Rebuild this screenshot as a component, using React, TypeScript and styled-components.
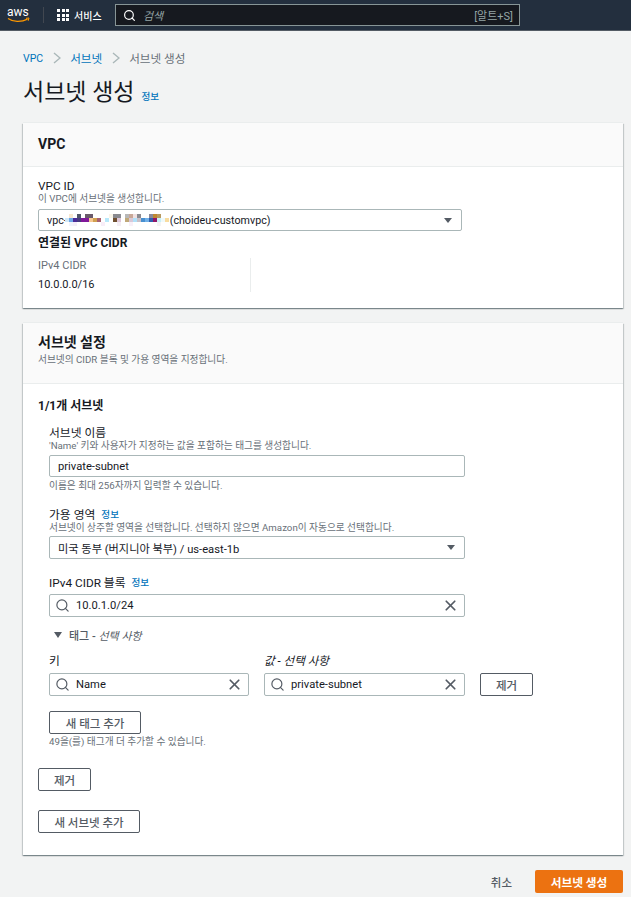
import React from "react";
import styled, { createGlobalStyle } from "styled-components";
import { Search, X } from "lucide-react";

const FONT = `Roboto, "Noto Sans CJK KR", sans-serif`;

const GlobalStyle = createGlobalStyle`
  html, body { margin: 0; padding: 0; background: #f2f3f3; }
  body { font-family: ${FONT}; color: #16191f; font-size: 12px; }
  * { box-sizing: border-box; }
`;

const Page = styled.div`
  width: 631px;
  height: 897px;
  overflow: hidden;
`;

const TopNav = styled.header`
  height: 31px;
  background: #232f3e;
  border-bottom: 1px solid #545b64;
  display: flex;
  align-items: center;
  padding-left: 7px;
`;

const Logo = styled.svg`
  width: 24px;
  height: 18px;
  flex: none;
`;

const NavDivider = styled.div`
  width: 1px;
  height: 16px;
  background: #414750;
  margin: 0 13px 0 12px;
`;

const ServicesBtn = styled.div`
  display: flex;
  align-items: center;
  gap: 5px;
  width: 58px;
  color: #fff;
  font-size: 10px;
  font-weight: 500;
`;

const Waffle = styled.div`
  display: grid;
  grid-template-columns: repeat(3, 3px);
  grid-auto-rows: 3px;
  gap: 1.5px;
  span { background: #fff; }
`;

const SearchBox = styled.div`
  width: 405px;
  height: 22px;
  background: #16191f;
  border: 1px solid #879596;
  display: flex;
  align-items: center;
  padding: 0 6px 0 7px;
  color: #fff;
  gap: 7px;
`;

const SearchHint = styled.span`
  flex: 1;
  font-style: italic;
  font-size: 11px;
  color: #95a5a6;
`;

const Shortcut = styled.span`
  font-size: 11px;
  color: #95a5a6;
`;

const Main = styled.main`
  padding: 19px 8px 0 23px;
`;

const Crumbs = styled.nav`
  display: flex;
  align-items: center;
  gap: 9.5px;
  height: 16px;
  font-size: 11.6px;
  color: #687078;
  a { color: #0073bb; }
  a:first-child { font-size: 10.5px; }
`;

const TitleRow = styled.div`
  display: flex;
  align-items: baseline;
  gap: 7px;
  margin-top: 11px;
  height: 31px;
  h1 {
    margin: 0;
    font-size: 23px;
    font-weight: 400;
    line-height: 31px;
  }
`;

const InfoLink = styled.a`
  font-size: 9.6px;
  color: #0073bb;
  font-weight: 500;
`;

const Card = styled.section<{ $height: number }>`
  background: #fff;
  height: ${(p) => p.$height}px;
  margin-bottom: 15px;
  box-shadow: 0 1px 1px 0 rgba(0, 28, 36, 0.3), 1px 1px 1px 0 rgba(0, 28, 36, 0.15), -1px 1px 1px 0 rgba(0, 28, 36, 0.15), 0 -1px 0 0 #eaeded;
  &:first-of-type { margin-top: 15px; }
`;

const CardHead = styled.div<{ $height: number; $top: number }>`
  height: ${(p) => p.$height}px;
  background: #fafafa;
  border-bottom: 1px solid #eaeded;
  padding: ${(p) => p.$top}px 15px 0;
  h2 {
    margin: 0;
    font-size: 14px;
    font-weight: 700;
    line-height: 19px;
  }
  p {
    margin: 2px 0 0;
    font-size: 9.7px;
    line-height: 12px;
    color: #687078;
  }
`;

const CardBody = styled.div<{ $top: number }>`
  padding: ${(p) => p.$top}px 15px 0;
`;

const Label = styled.div`
  font-size: 11.8px;
  line-height: 14px;
  display: flex;
  align-items: center;
  gap: 6px;
`;

const Hint = styled.div<{ $top?: number }>`
  font-size: 9.7px;
  line-height: 12px;
  color: #687078;
  margin-top: ${(p) => p.$top ?? 0}px;
`;

const Control = styled.div<{ $width: number; $height?: number; $top?: number; $pad?: string }>`
  width: ${(p) => p.$width}px;
  height: ${(p) => p.$height ?? 22}px;
  margin-top: ${(p) => p.$top ?? 0}px;
  background: #fff;
  border: 1px solid #aab7b8;
  border-radius: 2px;
  display: flex;
  align-items: center;
  font-size: 11.2px;
  color: #16191f;
  padding: ${(p) => p.$pad ?? "0 8px"};
  flex: none;
  svg { flex: none; color: #545b64; }
`;

const ControlText = styled.span`
  flex: 1;
  padding-left: 6px;
`;

const SelectText = styled.span<{ $size?: number }>`
  flex: 1;
  display: flex;
  align-items: center;
  font-size: ${(p) => p.$size ?? 11.2}px;
`;

const Caret = styled.i<{ $small?: boolean }>`
  width: 0;
  height: 0;
  border-left: ${(p) => (p.$small ? 4 : 4.5)}px solid transparent;
  border-right: ${(p) => (p.$small ? 4 : 4.5)}px solid transparent;
  border-top: ${(p) => (p.$small ? 6 : 5.5)}px solid #545b64;
  margin-right: 1px;
`;

const Blur = styled.span`
  display: inline-grid;
  grid-template-columns: repeat(26, 4px);
  grid-auto-rows: 4px;
  margin: 0 1px 0 -2px;
`;

const SubHead = styled.div<{ $top?: number }>`
  font-size: 12px;
  font-weight: 700;
  line-height: 16px;
  margin-top: ${(p) => p.$top ?? 0}px;
`;

const CidrGrid = styled.div`
  display: flex;
  margin-top: 7px;
`;

const CidrCell = styled.div`
  width: 213px;
  height: 34px;
  padding-top: 1px;
  border-right: 1px solid #eaeded;
  font-size: 11px;
  div:first-child { color: #687078; line-height: 14px; }
  div:last-child { margin-top: 5px; line-height: 14px; color: #16191f; }
`;

const Indent = styled.div`
  padding-left: 11px;
`;

const Field = styled.div<{ $top: number }>`
  margin-top: ${(p) => p.$top}px;
`;

const Expander = styled.div`
  display: flex;
  align-items: center;
  gap: 6px;
  margin-top: 11px;
  padding-left: 5px;
  height: 14px;
  font-size: 11px;
  color: #545b64;
  font-weight: 500;
  em { font-weight: 400; }
`;

const TagRow = styled.div`
  display: flex;
  gap: 15px;
  margin-top: 12px;
  align-items: flex-end;
`;

const TagCol = styled.div`
  display: flex;
  flex-direction: column;
  gap: 5px;
  em { font-size: 11.6px; line-height: 14px; }
`;

const OutlineBtn = styled.button<{ $width: number; $height?: number }>`
  width: ${(p) => p.$width}px;
  height: ${(p) => p.$height ?? 23}px;
  background: #fff;
  border: 1px solid #545b64;
  border-radius: 2px;
  font-family: ${FONT};
  font-size: 11.5px;
  font-weight: 500;
  color: #545b64;
  padding: 0;
  display: block;
`;

const Footer = styled.div`
  display: flex;
  justify-content: flex-end;
  align-items: center;
  gap: 23px;
  font-size: 11.5px;
  color: #545b64;
  font-weight: 500;
`;

const PrimaryBtn = styled.button`
  width: 88px;
  height: 23px;
  background: #ec7211;
  border: 0;
  border-radius: 2px;
  color: #fff;
  font-family: ${FONT};
  font-size: 11.7px;
  font-weight: 700;
  padding: 0;
`;

const W = "#ffffff";
const blurRows = [
  [W, "#f8e8d0", W, "#50566a", W, "#6a5a6a", "#6a5a6a", W, W, W, W, "#faf5e8", "#8a8a90", "#8a8a90", W, "#b8b8b8", "#c8a898", "#f0e0e0", "#8a8a90", W, W, "#8a8a9a", "#c08830", "#b89a60", W, W],
  ["#d0e8f8", "#70a8e8", "#4a2a98", "#4a3a80", "#80189a", "#80189a", "#f8c890", "#d0a050", "#a86070", W, "#b8e8fa", W, "#705030", "#e0c8d8", W, "#c0a878", "#d8c8d8", "#b0e0f8", "#c8c0c8", "#4890d0", "#70b0e8", "#3060b0", "#90186a", "#c8f0f8", "#f0fafa", "#f8dca0"],
  [W, "#f0f4fc", "#f4eef8", W, W, W, W, W, W, "#f8eef8", W, W, W, "#f4eef4", W, W, "#f8f0f8", W, W, W, W, W, W, "#f4f4f4", W, W],
];

function Mosaic() {
  return (
    <Blur>
      {blurRows.flat().map((c, i) => (
        <span key={i} style={{ background: c }} />
      ))}
    </Blur>
  );
}

function SearchField({ value, width }: { value: string; width: number }) {
  return (
    <Control $width={width} $height={23} $pad="0 5px 0 5px">
      <Search size={15} strokeWidth={1.9} />
      <ControlText>{value}</ControlText>
      <X size={17} strokeWidth={2.4} />
    </Control>
  );
}

function Chevron() {
  return (
    <svg width="8" height="12" viewBox="0 0 8 12">
      <path d="M1 1l6 5-6 5" fill="none" stroke="#aab7b8" strokeWidth="1.4" />
    </svg>
  );
}

export default function App() {
  return (
    <Page>
      <GlobalStyle />
      <TopNav>
        <Logo viewBox="0 0 24 18">
          <text x="0" y="10" fontFamily="Roboto, sans-serif" fontSize="12" fill="#fff">aws</text>
          <path d="M1 12.5c5 3.6 13 4 19.5.6" stroke="#f90" strokeWidth="1.2" fill="none" />
          <path d="M19 12.3l3-.3-.8 2.8" stroke="#f90" strokeWidth="1" fill="none" />
        </Logo>
        <NavDivider />
        <ServicesBtn>
          <Waffle>
            {Array.from({ length: 9 }).map((_, i) => (
              <span key={i} />
            ))}
          </Waffle>
          서비스
        </ServicesBtn>
        <SearchBox>
          <Search size={13} strokeWidth={2.2} />
          <SearchHint>검색</SearchHint>
          <Shortcut>[알트+S]</Shortcut>
        </SearchBox>
      </TopNav>
      <Main>
        <Crumbs>
          <a>VPC</a>
          <Chevron />
          <a>서브넷</a>
          <Chevron />
          <span>서브넷 생성</span>
        </Crumbs>
        <TitleRow>
          <h1>서브넷 생성</h1>
          <InfoLink>정보</InfoLink>
        </TitleRow>
        <Card $height={185}>
          <CardHead $height={44} $top={12}>
            <h2>VPC</h2>
          </CardHead>
          <CardBody $top={12}>
            <Label>VPC ID</Label>
            <Hint>이 VPC에 서브넷을 생성합니다.</Hint>
            <Control $width={424} $top={4}>
              <SelectText $size={10.7}>
                vpc-
                <Mosaic />
                (choideu-customvpc)
              </SelectText>
              <Caret />
            </Control>
            <SubHead $top={4}>연결된 VPC CIDR</SubHead>
            <CidrGrid>
              <CidrCell>
                <div>IPv4 CIDR</div>
                <div>10.0.0.0/16</div>
              </CidrCell>
            </CidrGrid>
          </CardBody>
        </Card>
        <Card $height={532}>
          <CardHead $height={61} $top={10}>
            <h2>서브넷 설정</h2>
            <p>서브넷의 CIDR 블록 및 가용 영역을 지정합니다.</p>
          </CardHead>
          <CardBody $top={14}>
            <SubHead>1/1개 서브넷</SubHead>
            <Indent>
              <Field $top={12}>
                <Label>서브넷 이름</Label>
                <Hint>'Name' 키와 사용자가 지정하는 값을 포함하는 태그를 생성합니다.</Hint>
                <Control $width={416} $top={3}>private-subnet</Control>
                <Hint $top={3}>이름은 최대 256자까지 입력할 수 있습니다.</Hint>
              </Field>
              <Field $top={16}>
                <Label>
                  가용 영역 <InfoLink>정보</InfoLink>
                </Label>
                <Hint>서브넷이 상주할 영역을 선택합니다. 선택하지 않으면 Amazon이 자동으로 선택합니다.</Hint>
                <Control $width={416} $height={23} $top={2}>
                  <SelectText>미국 동부 (버지니아 북부) / us-east-1b</SelectText>
                  <Caret />
                </Control>
              </Field>
              <Field $top={17}>
                <Label>
                  IPv4 CIDR 블록 <InfoLink>정보</InfoLink>
                </Label>
                <Field $top={4}>
                  <SearchField value="10.0.1.0/24" width={416} />
                </Field>
              </Field>
              <Expander>
                <Caret $small />
                <span>
                  태그 - <em>선택 사항</em>
                </span>
              </Expander>
              <TagRow>
                <TagCol>
                  <Label>키</Label>
                  <SearchField value="Name" width={200} />
                </TagCol>
                <TagCol>
                  <em>값 - 선택 사항</em>
                  <SearchField value="private-subnet" width={201} />
                </TagCol>
                <OutlineBtn $width={53}>제거</OutlineBtn>
              </TagRow>
              <Field $top={15}>
                <OutlineBtn $width={92}>새 태그 추가</OutlineBtn>
                <Hint $top={2}>49을(를) 태그개 더 추가할 수 있습니다.</Hint>
              </Field>
            </Indent>
            <Field $top={20}>
              <OutlineBtn $width={53}>제거</OutlineBtn>
            </Field>
            <Field $top={19}>
              <OutlineBtn $width={102}>새 서브넷 추가</OutlineBtn>
            </Field>
          </CardBody>
        </Card>
        <Footer>
          <span>취소</span>
          <PrimaryBtn>서브넷 생성</PrimaryBtn>
        </Footer>
      </Main>
    </Page>
  );
}
